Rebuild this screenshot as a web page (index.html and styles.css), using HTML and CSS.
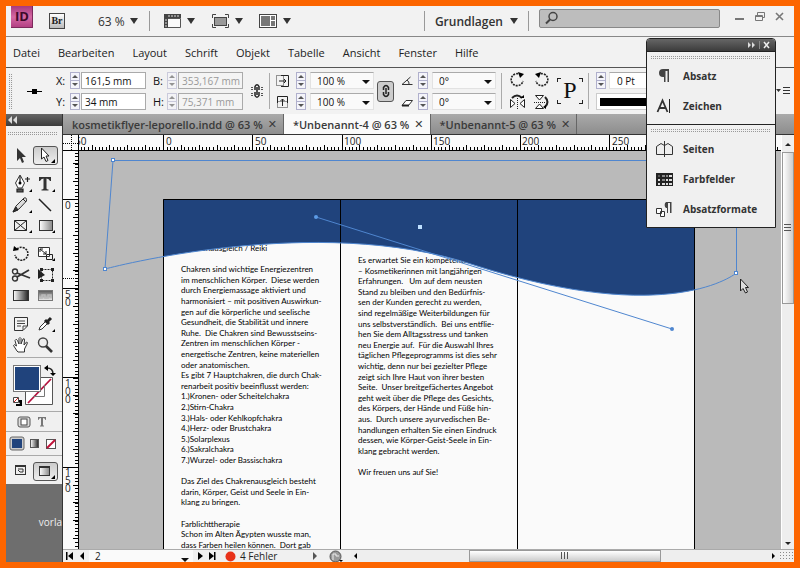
FILE: index.html
```html
<!DOCTYPE html>
<html lang="de">
<head>
  <meta charset="utf-8" />
  <title>*Unbenannt-4 @ 63 %</title>
  <link rel="stylesheet" href="styles.css">
</head>
<body>
<div id="app">

  <header id="appbar">
    <svg class="logo" width="22" height="22">
      <defs><linearGradient id="pink" x1="0" y1="0" x2="0" y2="1"><stop offset="0" stop-color="#a83a7c"/><stop offset=".5" stop-color="#d568a4"/><stop offset="1" stop-color="#b03c80"/></linearGradient></defs>
      <rect width="22" height="22" fill="url(#pink)"/>
      <path d="M0 21.500H21.500V0" fill="none" stroke="#7d2a5c"/>
      <text x="4" y="15" class="logo-text">ID</text>
    </svg>
    <button class="bridge">Br</button>
    <button class="drop zoom">63 %<i class="caret"></i></button>
    <span class="sep"></span>
    <button class="drop view" aria-label="Anzeigeoptionen">
      <svg width="20" height="16"><path d="M1 1H18V5H5V15H1Z" fill="#444"/><path d="M5 5.500H17.500V14.500H5" fill="#fafafa" stroke="#555"/><path d="M6 2V4M9 2V4M12 2V4M15 2V4M2 7H4M2 10H4M2 13H4" stroke="#ddd"/></svg><i class="caret"></i>
    </button>
    <button class="drop view" aria-label="Bildschirmmodus">
      <svg width="20" height="16"><path d="M1.500 5V1.500H5M14 1.500H17.500V5M17.500 11V14.500H14M5 14.500H1.500V11" fill="none" stroke="#444"/><rect x="3.500" y="4.500" width="12" height="8" fill="#999" stroke="#444"/></svg><i class="caret"></i>
    </button>
    <button class="drop view" aria-label="Dokumente anordnen">
      <svg width="20" height="16"><rect x=".5" y="1.500" width="17" height="13" fill="#fff" stroke="#444"/><path d="M2 3H11V13H2ZM12 3H16V7H12ZM12 8H16V13H12Z" fill="#777"/></svg><i class="caret"></i>
    </button>
    <span class="sep push"></span>
    <button class="drop workspace">Grundlagen<i class="caret"></i></button>
    <span class="sep"></span>
    <label class="search">
      <svg width="16" height="14"><circle cx="9" cy="5.500" r="4" fill="none" stroke="#444" stroke-width="1.500"/><path d="M6 8.500L2 12.500" stroke="#444" stroke-width="2"/></svg>
      <input type="text" aria-label="Suchen">
    </label>
    <button class="win" aria-label="Minimieren"><svg width="12" height="12"><path d="M1 8H10" stroke="#777" stroke-width="2"/></svg></button>
    <button class="win" aria-label="Wiederherstellen"><svg width="12" height="12"><path d="M3.500 4V1.500H10.500V6.500H8.500M1.500 4.500H8.500V9.500H1.500ZM1 5.500H8" fill="none" stroke="#777"/></svg></button>
    <button class="win" aria-label="Schließen"><svg width="12" height="12"><path d="M2 2L9 9M9 2L2 9" stroke="#777" stroke-width="1.600"/></svg></button>
  </header>

  <nav id="menu">
    <a href="#">Datei</a><a href="#">Bearbeiten</a><a href="#">Layout</a><a href="#">Schrift</a><a href="#">Objekt</a><a href="#">Tabelle</a><a href="#">Ansicht</a><a href="#">Fenster</a><a href="#">Hilfe</a>
  </nav>

  <div id="control">
    <span class="vgrip"></span>
    <svg class="refpoint" width="18" height="12"><path d="M1 6.500H16" stroke="#000"/><rect x="6" y="4" width="5" height="5"/></svg>
    <div class="fields pos">
      <label for="fx">X:</label><span class="spin"></span><input id="fx" value="161,5 mm">
      <label for="fy">Y:</label><span class="spin"></span><input id="fy" value="34 mm">
    </div>
    <div class="fields pos">
      <label for="fb">B:</label><span class="spin off"></span><input id="fb" value="353,167 mm" disabled>
      <label for="fh">H:</label><span class="spin off"></span><input id="fh" value="75,371 mm" disabled>
    </div>
    <svg class="chain" width="14" height="18"><path d="M5 8V4.500Q7 1 9 4.500V8M5 10V13.500Q7 17 9 13.500V10M7 5V13" fill="none" stroke="#222" stroke-width="1.500"/><path d="M2 5V8M12 5V8M2 11V14M12 11V14" stroke="#555" stroke-width="2" stroke-dasharray="1 1"/></svg>
    <span class="sep tall"></span>
    <div class="fields scale">
      <svg width="16" height="14"><rect x="1.500" y="1.500" width="7" height="10" fill="none" stroke="#333" stroke-dasharray="1 1"/><path d="M6 1.500H13.500V12.500H6M4 7H11M9 5L11 7L9 9" fill="none" stroke="#222"/></svg><span class="spin"></span><span class="combo"><select aria-label="X-Skalierung"><option>100 %</option></select></span>
      <svg width="16" height="14"><rect x="2.500" y="6.500" width="10" height="6" fill="none" stroke="#333" stroke-dasharray="1 1"/><path d="M2.500 8V1.500H12.500V8M7.500 11V4M5.500 6L7.500 4L9.500 6" fill="none" stroke="#222"/></svg><span class="spin"></span><span class="combo"><select aria-label="Y-Skalierung"><option>100 %</option></select></span>
    </div>
    <button class="lock" aria-label="Proportionen beibehalten"><svg width="12" height="16"><path d="M3.500 7V4.500Q6 .5 8.500 4.500V7M3.500 9V11.500Q6 15.500 8.500 11.500V9M6 5V11" fill="none" stroke="#222" stroke-width="1.500"/></svg></button>
    <div class="fields angle">
      <svg width="14" height="14"><path d="M10.500 3L2 10.500H12.500M7 6Q9.500 8 9 10" fill="none" stroke="#333"/></svg><span class="spin"></span><span class="combo"><select aria-label="Drehwinkel"><option>0°</option></select></span>
      <svg width="14" height="14"><path d="M2 10.500L6 5.500H12.500L8.500 10.500Z" fill="#fff" stroke="#333"/><path d="M2 10.500H9" stroke="#222" stroke-width="2"/></svg><span class="spin"></span><span class="combo"><select aria-label="Scherwinkel"><option>0°</option></select></span>
    </div>
    <span class="sep tall"></span>
    <div class="turns">
      <button aria-label="90° drehen"><svg width="18" height="16"><path d="M12 3A6 6 0 1 0 14 9" fill="none" stroke="#222" stroke-width="1.600" stroke-dasharray="2 1"/><path d="M9 0L15 2L11 6Z"/></svg></button>
      <button aria-label="-90° drehen"><svg width="18" height="16"><path d="M5 3A6 6 0 1 1 3 9" fill="none" stroke="#222" stroke-width="1.600" stroke-dasharray="2 1"/><path d="M8 0L2 2L6 6Z"/></svg></button>
      <button aria-label="Horizontal spiegeln"><svg width="18" height="16"><path d="M3 4Q8 -1 13 4" fill="none" stroke="#222" stroke-width="2"/><path d="M11 4H15V1Z"/><path d="M1.500 5.500V13.500L6 9.500ZM15.500 5.500V13.500L11 9.500Z" fill="#fff" stroke="#222"/><path d="M8.500 4V15" stroke="#222" stroke-dasharray="1 1"/></svg></button>
      <button aria-label="Vertikal spiegeln"><svg width="18" height="16"><path d="M12 3Q17 8 12 13" fill="none" stroke="#222" stroke-width="2"/><path d="M10 13L13 15V11Z"/><path d="M2.500 1.500H10.500L6.500 6ZM2.500 14.500H10.500L6.500 10Z" fill="#fff" stroke="#222"/><path d="M1 8.500H13" stroke="#222" stroke-dasharray="1 1"/></svg></button>
    </div>
    <span class="pbox">P</span>
    <span class="sep tall"></span>
    <div class="stroke">
      <span class="spin"></span><input aria-label="Konturstärke" value="0 Pt">
      <span class="line"></span>
    </div>
    <button class="flyout" aria-label="Bedienfeldmenü"><svg width="16" height="14"><path d="M0 5H5L2.500 8ZM7 3H14V4H7ZM7 6H14V7H7ZM7 9H14V10H7Z" fill="#333"/></svg></button>
  </div>

  <div id="work">
    <aside id="toolbox">
      <div class="dark"><svg width="10" height="8"><path d="M4 0V8L0 4ZM9 0V8L5 4Z" fill="#ddd"/></svg></div>
      <div class="grip"></div>
      <div class="tools">
        <button aria-label="Auswahl"><svg width="24" height="20"><path d="M6 2V15L9 12L11 17L13 16L11 11H15Z" fill="#333"/></svg></button>
        <button class="on" aria-label="Direktauswahl"><svg width="24" height="20"><path d="M8.500 3V14L11 12L13 16.500L15 15.500L13 11H16Z" fill="#fff" stroke="#222"/><path d="M22 14V18H18Z"/></svg></button>
      </div>
      <div class="tools">
        <button aria-label="Zeichenstift"><svg width="24" height="20"><path d="M9 1L13.500 9L11 14H7L4.500 9Z" fill="#fff" stroke="#333"/><path d="M9 2V9M6 15H12V18H6ZM14 5H19M16.500 3V8" stroke="#222" fill="#555" stroke-width="1.200"/><circle cx="9" cy="9" r="1.500"/><path d="M21 15V18H18Z"/></svg></button>
        <button aria-label="Text"><svg width="24" height="20"><path d="M6 3H18V7H17Q16 4.500 13.500 4.500V14.500Q13.500 15.500 15.500 15.500V16.500H8.500V15.500Q10.500 15.500 10.500 14.500V4.500Q8 4.500 7 7H6Z" fill="#333"/><path d="M22 15V18H19Z"/></svg></button>
        <button aria-label="Buntstift"><svg width="24" height="20"><path d="M2 17L5 11L13 3Q16 2 15.500 6L8 14Z" fill="#ddd" stroke="#333"/><path d="M2 17L5 12L7 15ZM12 4L15 7" fill="#333" stroke="#222"/><path d="M21 15V18H18Z"/></svg></button>
        <button aria-label="Linienzeichner"><svg width="24" height="20"><path d="M6 4L18 16" stroke="#222" stroke-width="1.500"/></svg></button>
        <button aria-label="Rechteckrahmen"><svg width="24" height="20"><path d="M3.500 4.500H15.500V14.500H3.500ZM3.500 4.500L15.500 14.500M15.500 4.500L3.500 14.500" fill="none" stroke="#222"/><path d="M21 14V17H18Z"/></svg></button>
        <button aria-label="Rechteck"><svg width="24" height="20"><defs><linearGradient id="gr" x2="1"><stop offset="0" stop-color="#fff"/><stop offset="1" stop-color="#888"/></linearGradient></defs><rect x="6.500" y="4.500" width="13" height="10" fill="url(#gr)" stroke="#333"/><path d="M22 14V17H19Z"/></svg></button>
      </div>
      <div class="tools">
        <button aria-label="Drehen"><svg width="24" height="20"><path d="M6 5A6.500 6.500 0 1 1 4 11" fill="none" stroke="#222" stroke-width="1.600" stroke-dasharray="2 1"/><path d="M2 7L3 2L8 6Z"/></svg></button>
        <button aria-label="Skalieren"><svg width="24" height="20"><path d="M5.500 3.500H16.500V12.500H5.500Z" fill="#fff" stroke="#333"/><path d="M7 5L13 10M7 8V5H10M13 7V10H10M13.500 10.500H19.500V15.500H13.500Z" fill="none" stroke="#222"/><path d="M22 14V17H19Z"/></svg></button>
        <button aria-label="Schere"><svg width="24" height="20"><path d="M6 8L19 13M6 12L18 5" stroke="#333" stroke-width="1.800"/><circle cx="4" cy="6.500" r="2.500" fill="none" stroke="#333" stroke-width="1.400"/><circle cx="4" cy="13.500" r="2.500" fill="none" stroke="#333" stroke-width="1.400"/></svg></button>
        <button aria-label="Frei transformieren"><svg width="24" height="20"><rect x="8.500" y="4.500" width="11" height="11" fill="none" stroke="#222" stroke-dasharray="2 1"/><path d="M5 4V14L12 10ZM7 3H10V6H7ZM18 3H21V6H18ZM18 14H21V17H18ZM7 14H10V17H7Z" fill="#222"/></svg></button>
        <button aria-label="Verlaufsfarbfeld"><svg width="24" height="20"><defs><linearGradient id="bw" x2="1"><stop offset="0" stop-color="#fff"/><stop offset="1" stop-color="#222"/></linearGradient></defs><rect x="2.500" y="4.500" width="15" height="10" fill="url(#bw)" stroke="#333"/></svg></button>
        <button aria-label="Weiche Verlaufskante"><svg width="24" height="20"><defs><linearGradient id="fd" x2="0" y2="1"><stop offset="0" stop-color="#555"/><stop offset="1" stop-color="#eee"/></linearGradient></defs><rect x="5.500" y="4.500" width="14" height="10" fill="url(#fd)" stroke="#777"/><path d="M6 12H9V9H12V12H15V9H18V12" fill="none" stroke="#bbb" stroke-width="1.500"/></svg></button>
      </div>
      <div class="tools">
        <button aria-label="Notiz"><svg width="24" height="20"><path d="M3.500 3.500H16.500V12L12 16.500H3.500Z" fill="#f4f4f4" stroke="#333"/><path d="M6 7H14M6 9.500H14M6 12H10M12 16V12H16" fill="none" stroke="#444"/></svg></button>
        <button aria-label="Pipette"><svg width="24" height="20"><path d="M6 16L7 13L13 7L15 9L9 15Z" fill="#fff" stroke="#333"/><path d="M12 6L16 10M14 8L18 4" stroke="#222" stroke-width="3"/><path d="M22 15V18H19Z"/></svg></button>
        <button aria-label="Hand"><svg width="24" height="20"><path d="M6 16L2.500 10.500Q3 8.500 5.500 11L4 5.500Q5 3 6.500 5.500L8 9V3.500Q9 1.500 10 3.500V9L12 4Q13.500 3 13.500 5L13 10L15.500 7Q17 7 16 9L13.500 14V17H7Z" fill="#fff" stroke="#333"/></svg></button>
        <button aria-label="Zoom"><svg width="24" height="20"><circle cx="10" cy="7.500" r="4.500" fill="#eee" stroke="#444" stroke-width="1.400"/><path d="M13 11L19 17" stroke="#333" stroke-width="2.600"/></svg></button>
      </div>
      <div class="swatches">
        <svg width="50" height="48">
          <path d="M32 15.500H44.500V42.500H17.500V30" fill="#fff" stroke="#555"/><path d="M20 41L43 17" stroke="#b5123f" stroke-width="1.800"/><path d="M36.500 23V34.500H25" fill="none" stroke="#777"/>
          <rect x="5.500" y="3.500" width="27" height="26" fill="#fff" stroke="#777"/><rect x="7" y="5" width="24" height="23" fill="#20437c"/>
          <path d="M39 6Q45 6 45 12" fill="none" stroke="#222" stroke-width="1.500"/><path d="M36 6L40 3V9ZM42 11H48L45 14Z"/>
          <path d="M10 38H14V44H8V42H12Z"/><path d="M5.500 35.500H10.500V40.500H5.500Z" fill="#fff" stroke="#444"/><path d="M6 40L10 36" stroke="#c22"/>
        </svg>
      </div>
      <div class="apply two">
        <button aria-label="Formatierung wirkt sich auf Rahmen aus"><svg width="14" height="12"><rect x="1" y="1" width="12" height="10" rx="2" fill="#ddd" stroke="#555"/><rect x="4" y="3" width="6" height="6" fill="#fff" stroke="#444"/></svg></button>
        <button aria-label="Formatierung wirkt sich auf Text aus"><svg width="12" height="12"><path d="M2 1H10V4H9.500Q9 2 7 2V9.500H8V10.500H4V9.500H5V2Q3 2 2.500 4H2Z" fill="#777"/></svg></button>
      </div>
      <div class="apply fill">
        <button aria-label="Farbe"><svg width="16" height="16"><rect x="1" y="1" width="14" height="13" rx="2" fill="#ccc" stroke="#666"/><rect x="3" y="3" width="10" height="9" fill="#20437c"/></svg></button>
        <button aria-label="Verlauf"><svg width="10" height="12"><rect x=".5" y="1.500" width="8" height="8" fill="url(#bw)" stroke="#555"/></svg></button>
        <button aria-label="Ohne"><svg width="12" height="12"><rect x="1.500" y="1.500" width="9" height="9" fill="#fff" stroke="#555"/><path d="M2 10L10 2" stroke="#c1123a" stroke-width="2"/></svg></button>
      </div>
      <div class="tools modes">
        <button aria-label="Normal"><svg width="24" height="20"><rect x="4.500" y="4.500" width="10" height="9" fill="#eee" stroke="#333"/><path d="M4 5.500H15M7 8H12V11H9L7 9" fill="none" stroke="#333"/></svg></button>
        <button class="on" aria-label="Vorschau"><svg width="24" height="20"><rect x="6.500" y="5.500" width="10" height="9" fill="url(#gr)" stroke="#333"/><path d="M6 6.500H17" stroke="#333"/><path d="M22 14V18H18Z"/></svg></button>
      </div>
      <div class="rest">vorla</div>
    </aside>

    <main id="doc">
      <div id="tabs">
        <div class="tab">kosmetikflyer-leporello.indd @ 63 %<button aria-label="Schließen">✕</button></div>
        <div class="tab active">*Unbenannt-4 @ 63 %<button aria-label="Schließen">✕</button></div>
        <div class="tab">*Unbenannt-5 @ 63 %<button aria-label="Schließen">✕</button></div>
      </div>

      <div id="view">
        <svg class="corner" width="16" height="16"><path d="M8.500 0V16M0 8.500H16" stroke="#000" stroke-dasharray="1 1"/></svg>
        <svg class="ruler" width="100%" height="16" shape-rendering="crispEdges">
          <path d="M1.900 13.500H2000" stroke="#000" stroke-width="3" stroke-dasharray="1 2.570"/>
          <path d="M12.600 12.500H2000" stroke="#000" stroke-width="5" stroke-dasharray="1 16.850"/>
          <path d="M84 8H2000" stroke="#000" stroke-width="16" stroke-dasharray="1 88.250"/>
          <text x="-4" y="10">50</text><text x="87" y="10">0</text><text x="176" y="10">50</text><text x="265" y="10">100</text><text x="354" y="10">150</text><text x="443" y="10">200</text><text x="533" y="10">250</text><text x="622" y="10">300</text>
        </svg>
        <svg class="ruler side" width="16" height="100%" shape-rendering="crispEdges">
          <path d="M13.500 1.900V2000" stroke="#000" stroke-width="3" stroke-dasharray="1 2.570"/>
          <path d="M12.500 12.300V2000" stroke="#000" stroke-width="5" stroke-dasharray="1 16.850"/>
          <path d="M8 48V2000" stroke="#000" stroke-width="16" stroke-dasharray="1 88.250"/>
          <path d="M0 127.500H16" stroke="#000" stroke-dasharray="1 1"/>
          <text x="2" y="58">0</text>
          <text x="2" y="147">5</text><text x="2" y="155">0</text>
          <text x="2" y="236">1</text><text x="2" y="244">0</text><text x="2" y="252">0</text>
          <text x="2" y="325">1</text><text x="2" y="333">5</text><text x="2" y="341">0</text>
        </svg>

        <div id="canvas">
          <article class="page">
            <p class="col">
              <span>Chakrenausgleich / Reiki</span>
              <span></span>
              <span>Chakren sind wichtige Energiezentren</span>
              <span>im menschlichen Körper.  Diese werden</span>
              <span>durch Energiemassage aktiviert und</span>
              <span>harmonisiert – mit positiven Auswirkun-</span>
              <span>gen auf die körperliche und seelische</span>
              <span>Gesundheit, die Stabilität und innere</span>
              <span>Ruhe.  Die Chakren sind Bewusstseins-</span>
              <span>Zentren im menschlichen Körper -</span>
              <span>energetische Zentren, keine materiellen</span>
              <span>oder anatomischen.</span>
              <span>Es gibt 7 Hauptchakren, die durch Chak-</span>
              <span>renarbeit positiv beeinflusst werden:</span>
              <span>1.)Kronen- oder Scheitelchakra</span>
              <span>2.)Stirn-Chakra</span>
              <span>3.)Hals- oder Kehlkopfchakra</span>
              <span>4.)Herz- oder Brustchakra</span>
              <span>5.)Solarplexus</span>
              <span>6.)Sakralchakra</span>
              <span>7.)Wurzel- oder Bassischakra</span>
              <span></span>
              <span>Das Ziel des Chakrenausgleich besteht</span>
              <span>darin, Körper, Geist und Seele in Ein-</span>
              <span>klang zu bringen.</span>
              <span></span>
              <span>Farblichttherapie</span>
              <span>Schon im Alten Ägypten wusste man,</span>
              <span>dass Farben heilen können.  Dort gab</span>
            </p>
            <p class="col second">
              <span>Es erwartet Sie ein kompetentes Team</span>
              <span>– Kosmetikerinnen mit langjährigen</span>
              <span>Erfahrungen.   Um auf dem neusten</span>
              <span>Stand zu bleiben und den Bedürfnis-</span>
              <span>sen der Kunden gerecht zu werden,</span>
              <span>sind regelmäßige Weiterbildungen für</span>
              <span>uns selbstverständlich.  Bei uns entflie-</span>
              <span>hen Sie dem Alltagsstress und tanken</span>
              <span>neu Energie auf.  Für die Auswahl Ihres</span>
              <span>täglichen Pflegeprogramms ist dies sehr</span>
              <span>wichtig, denn nur bei gezielter Pflege</span>
              <span>zeigt sich Ihre Haut von ihrer besten</span>
              <span>Seite.  Unser breitgefächertes Angebot</span>
              <span>geht weit über die Pflege des Gesichts,</span>
              <span>des Körpers, der Hände und Füße hin-</span>
              <span>aus.  Durch unsere ayurvedischen Be-</span>
              <span>handlungen erhalten Sie einen Eindruck</span>
              <span>dessen, wie Körper-Geist-Seele in Ein-</span>
              <span>klang gebracht werden.</span>
              <span></span>
              <span>Wir freuen uns auf Sie!</span>
            </p>
            <p class="col"></p>
          </article>
          <!-- blue wave, fold lines and the selected path -->
          <svg class="shape" width="100%" height="100%">
            <defs><clipPath id="sheet"><rect x="84" y="48" width="532" height="900"/></clipPath></defs>
            <path clip-path="url(#sheet)" d="M34 9L26 118C26 118 237 61 395 114C593 177 657 122 657 122V9Z" fill="#20437c"/>
            <path d="M84.500 900V48.500H615.500V900M261.500 48V900M438.500 48V900" fill="none" stroke="#000"/>
            <path d="M34 9.500L26 118C26 118 237 61 395 114C593 177 657 122 657.500 122V9.500ZM237 66L593 178" fill="none" stroke="#4f86cf"/>
            <g fill="#fff" stroke="#4f86cf"><rect x="32.500" y="7.500" width="3" height="3"/><rect x="24.500" y="116.500" width="3" height="3"/><rect x="655.500" y="120.500" width="3" height="3"/></g>
            <rect x="339" y="74" width="4" height="4" fill="#bfe0ff"/>
            <circle cx="237" cy="66" r="2" fill="#5c9be6"/><circle cx="593" cy="178" r="2" fill="#4f86cf"/>
            <path d="M661.500 128V140L664 137.500L666.500 142L668.500 141L666.500 136.500H669.500Z" fill="#ddd" stroke="#222"/>
          </svg>
        </div>
      </div>

      <div id="vscroll">
        <svg width="12" height="12"><path d="M3 7H9L6 4Z" fill="#222"/></svg>
        <div class="thumb"><svg width="8" height="10"><path d="M0 1.500H7M0 4.500H7M0 7.500H7" stroke="#555"/></svg></div>
        <svg class="down" width="12" height="12"><path d="M3 5H9L6 8Z" fill="#222"/></svg>
      </div>

      <footer id="status">
        <button aria-label="Erste Seite"><svg width="10" height="10"><path d="M1 1H2.500V9H1ZM8 1V9L3 5Z"/></svg></button>
        <button aria-label="Vorherige Seite"><svg width="10" height="10"><path d="M6 1V9L2 5Z"/></svg></button>
        <span class="combo pages"><select aria-label="Seite"><option>2</option></select></span>
        <button aria-label="Nächste Seite"><svg width="10" height="10"><path d="M3 1V9L8 5Z"/></svg></button>
        <button aria-label="Letzte Seite"><svg width="10" height="10"><path d="M1 1V9L6 5ZM6 1H7.500V9H6Z"/></svg></button>
        <svg class="error" width="11" height="11"><circle cx="5.500" cy="5.500" r="5" fill="#e8321a"/></svg>
        <span class="msg">4 Fehler</span>
        <button aria-label="Preflight-Menü"><svg width="10" height="10"><path d="M3 1V9L7 5Z" fill="#555"/></svg></button>
        <svg class="clock" width="14" height="12"><circle cx="6.500" cy="6.500" r="5.500" fill="#999" stroke="#555"/><path d="M4 10V4H7V6H10" fill="none" stroke="#eee"/><path d="M10 10H14L12 12Z"/></svg>
        <div id="hscroll">
          <svg width="10" height="10"><path d="M6 2V8L3 5Z"/></svg>
          <div class="thumb"><svg width="10" height="8"><path d="M1.500 0V7M4.500 0V7M7.500 0V7" stroke="#555"/></svg></div>
          <svg width="10" height="10"><path d="M3 2V8L6 5Z"/></svg>
        </div>
        <span class="size"></span>
      </footer>
    </main>
  </div>

  <section id="dock">
    <div class="dark"><svg width="28" height="8"><path d="M1 1V7L4 4ZM5 1V7L8 4Z" fill="#ddd"/><path d="M12.500 0V8" stroke="#888"/><path d="M17 1L22 7M22 1L17 7" stroke="#eee" stroke-width="1.500"/></svg></div>
    <div class="group">
      <div class="grip"></div>
      <button><svg width="20" height="20"><path d="M12 3H8A4 4 0 0 0 8 11H9V16H10.500V5H12.500V16H14V3Z" fill="#444"/></svg>Absatz</button>
      <button><svg width="20" height="20"><path d="M2.500 16L7.500 4.500L12.500 16M4.500 12H10.500" fill="none" stroke="#333" stroke-width="1.800"/><path d="M14.500 3V17" stroke="#222"/></svg>Zeichen</button>
    </div>
    <div class="group">
      <div class="grip"></div>
      <button><svg width="20" height="20"><path d="M1.500 7.500L6 4.500L9.500 6.500V15.500H1.500ZM17.500 7.500L13 4.500L9.500 6.500V15.500H17.500Z" fill="#eee" stroke="#333"/><path d="M9.500 2V18" stroke="#333"/></svg>Seiten</button>
      <button><svg width="20" height="20"><rect x="1" y="4" width="17" height="13" fill="#222"/><path d="M3 6H5V8H3Z" fill="#555"/><path d="M7 6H10V8H7ZM11 6H13V8H11ZM7 10H10V12H7Z" fill="#888"/><path d="M14 6H17V8H14ZM11 10H13V12H11ZM14 10H17V12H14ZM3 10H5V12H3ZM3 14H5V16H3ZM7 14H10V16H7ZM11 14H13V16H11ZM14 14H17V16H14Z" fill="#ddd"/></svg>Farbfelder</button>
      <button><svg width="20" height="20"><path d="M15 3H11A4 4 0 0 0 11 9H12V14H13V4H15V14H16.500V3Z" fill="#444"/><path d="M5.500 12.500H9.500V17.500H5.500ZM1.500 9.500H6.500V14.500H1.500Z" fill="#fff" stroke="#333"/></svg>Absatzformate</button>
    </div>
  </section>

</div>
</body>
</html>
```
FILE: styles.css
```css
html, body { margin: 0; padding: 0; height: 100%; }
body { font-family: "Open Sans", "Noto Sans", sans-serif; font-size: 12px; color: #333; background: #fc6500; }
* { box-sizing: border-box; }
button, input, select { font: inherit; color: inherit; margin: 0; padding: 0; border: 0; background: none; border-radius: 0; outline: none; }
svg { display: block; flex: none; }
#app { position: relative; height: 100vh; border: 6px solid #fc6500; background: #f2f2f2; display: flex; flex-direction: column; overflow: hidden; }

.caret { width: 0; height: 0; border: 4px solid transparent; border-top: 6px solid #333; border-bottom: 0; }
.sep { width: 1px; height: 20px; background: #999; }
.sep.tall { height: 36px; background: #aaa; }
.dark { height: 12px; background: linear-gradient(#666, #3c3c3c); display: flex; align-items: center; }
.grip, .vgrip { height: 5px; background: repeating-linear-gradient(#f0f0f0 0 1px, transparent 1px 2px), repeating-linear-gradient(90deg, #999 0 1px, #f0f0f0 1px 2px); }

/* application bar */
#appbar { display: flex; align-items: center; height: 31px; flex: none; border-bottom: 1px solid #888; padding-left: 5px; padding-right: 6px; }
.logo { align-self: flex-start; }
.logo-text { font: bold 13px "Open Sans", sans-serif; fill: #3c0a2a; }
.bridge { width: 16px; height: 16px; margin-left: 16px; border: 1px solid #444; background: linear-gradient(#fff, #bbb); font: bold 10px/12px "Liberation Serif", serif; text-align: center; color: #222; }
.drop { display: flex; align-items: center; }
.drop .caret { margin-left: 7px; }
.zoom { margin-left: 33px; margin-right: 11px; }
.zoom .caret { margin-left: 5px; }
.view { margin-left: 13px; width: 35px; }
.view .caret { margin-left: 4px; }
.push { margin-left: auto; }
.workspace { font-weight: 600; padding: 0 10px; }
.search { display: flex; align-items: center; width: 181px; height: 19px; margin: 0 8px 6px 10px; padding-left: 4px; border: 1px solid #888; background: #bdbdbd; border-radius: 2px; }
.search input { flex: 1; min-width: 0; }
.win { margin: 0 0 8px 4px; width: 16px; padding-left: 2px; }

#menu { display: flex; align-items: center; flex: none; height: 31px; padding-left: 7px; gap: 18px; border-bottom: 1px solid #555; font-size: 11px; }
#menu a { color: #222; text-decoration: none; }

/* control panel */
#control { display: flex; align-items: center; flex: none; height: 46px; font-size: 10px; color: #111; }
.vgrip { width: 4px; height: 36px; margin-left: 3px; }
.refpoint { margin: 0 12px 0 13px; }
.fields { display: grid; row-gap: 4px; align-items: center; }
.fields label { font-size: 11px; line-height: 16px; }
.pos { grid-template-columns: 14px 11px 65px; width: 90px; margin-right: 7px; }
.scale { grid-template-columns: 21px 14px 64px; margin-left: 5px; }
.angle { grid-template-columns: 18px 14px 64px; margin: 0 5px 0 6px; }
.fields input, .stroke input { width: 100%; height: 17px; border: 1px solid #aaa; background: #fff; padding-left: 3px; }
.fields input:disabled { color: #999; background: #f4f4f4; }
.spin { position: relative; width: 10px; height: 17px; border: 1px solid #b0b0cc; background: linear-gradient(#b0b0cc, #b0b0cc) 0 7px / 100% 1px no-repeat #f4f4fa; }
.spin::before, .spin::after { content: ""; position: absolute; left: 1px; border: 3px solid transparent; }
.spin::before { top: 2px; border-bottom: 3px solid #555; border-top: 0; }
.spin::after { bottom: 2px; border-top: 3px solid #555; border-bottom: 0; }
.spin.off { opacity: .6; }
.combo { position: relative; display: block; }
.combo::after { content: ""; position: absolute; right: 4px; top: 8px; border: 4px solid transparent; border-top: 4px solid #111; border-bottom: 0; }
.combo select { appearance: none; display: block; width: 100%; height: 17px; padding-left: 6px; background: #fafafa; border: 1px solid #e2e2e2; border-top-color: #aaa; }
.chain { margin-right: 5px; }
.lock { width: 17px; height: 21px; margin-left: 3px; padding-left: 2px; border: 1px solid #555; border-radius: 3px; background: #ccc; }
.turns { display: grid; grid-template-columns: 24px 24px; row-gap: 6px; margin-left: 7px; }
.pbox { width: 26px; height: 26px; font: 24px/24px "Liberation Serif", serif; text-align: center;
  background: linear-gradient(#222, #222) 0 0 / 4px 1px, linear-gradient(#222, #222) 0 0 / 1px 4px, linear-gradient(#222, #222) 100% 0 / 4px 1px, linear-gradient(#222, #222) 100% 0 / 1px 4px, linear-gradient(#222, #222) 0 100% / 4px 1px, linear-gradient(#222, #222) 0 100% / 1px 4px, linear-gradient(#222, #222) 100% 100% / 4px 1px, linear-gradient(#222, #222) 100% 100% / 1px 4px;
  background-repeat: no-repeat; margin-right: 5px; }
.stroke { display: grid; grid-template-columns: 13px 1fr; row-gap: 4px; flex: 1; margin: 0 50px 0 7px; }
.stroke input { border-color: #aaa #e2e2e2 #e2e2e2; padding-left: 7px; }
.stroke .line { grid-column: 1 / 3; height: 17px; border: 1px solid #ccc; background: linear-gradient(#000, #000) 3px 4px / 100% 8px no-repeat #fff; }
.flyout { margin-right: 2px; }

/* toolbox */
#work { display: flex; flex: 1; min-height: 0; }
#toolbox { width: 57px; flex: none; display: flex; flex-direction: column; border-right: 1px solid #333; background: #f0f0f0; }
#toolbox .dark { padding-left: 2px; flex: none; }
#toolbox .grip { margin: 5px 4px 5px 2px; flex: none; }
.tools { display: grid; grid-template-columns: 25px 25px; margin-left: 1px; padding: 4px 1px 2px; border-bottom: 1px solid #aaa; flex: none; }
.tools button { height: 21px; }
.tools button:nth-child(odd) svg { margin-left: 3px; }
.tools .on { height: 19px; align-self: center; border: 1px solid #555; border-radius: 3px; background: linear-gradient(#ccc, #eee); }
.on svg { margin: -2px 0 0 -1px; }
.swatches { height: 54px; padding: 4px 0 0 2px; border-bottom: 1px solid #aaa; flex: none; }
.apply { display: flex; align-items: center; border-bottom: 1px solid #aaa; flex: none; }
.two { height: 20px; padding-left: 11px; gap: 5px; }
.fill { height: 24px; padding-left: 3px; gap: 5px; }
.modes { height: 28px; border-bottom: 0; }
.rest { flex: 1; padding-top: 30px; background: #6e6e6e; color: #eee; font-size: 10px; line-height: 16px; text-align: right; overflow: hidden; }

/* document window */
#doc { flex: 1; min-width: 0; display: grid; grid-template: 21px 1fr 13px / 1fr 13px; }
#tabs { grid-column: 1 / 3; display: flex; background: linear-gradient(#aaa, #8d8d8d); border-bottom: 1px solid #333; }
.tab { display: flex; align-items: center; padding: 0 6px 0 9px; border-right: 1px solid #666; font-weight: 600; color: #3a3a3a; font-size: 11px; white-space: nowrap; }
.tab.active { background: #fafafa; }
.tab button { margin-left: 5px; font: 11px "DejaVu Sans", sans-serif; }
#view { display: grid; grid-template: 16px 1fr / 16px 1fr; min-width: 0; min-height: 0; overflow: hidden; background: #fafafa; }
.corner { border-right: 1px solid #000; border-bottom: 1px solid #000; }
.ruler { overflow: hidden; border-bottom: 1px solid #000; }
.ruler.side { border-bottom: 0; border-right: 1px solid #000; min-height: 0; }
.ruler text { font: 10px "Open Sans", sans-serif; fill: #222; }
#canvas { position: relative; overflow: hidden; min-height: 0; background: #bababa; }
.page { display: flex; width: 532px; min-height: 900px; margin: 48px 0 0 84px; background: #fafafa; }
.col { width: 177px; margin: 0; padding: 44px 0 0 18px; display: grid; grid-auto-rows: 11px 10px 11px 10px 11px; align-content: start; font: 8px/11px "Lato", sans-serif; color: #000; white-space: pre; }
.col.second { padding-top: 56px; }
.shape { position: absolute; left: 0; top: 0; }

.thumb { display: flex; align-items: center; justify-content: center; border: 1px solid #999; }
#vscroll { display: flex; flex-direction: column; background: #eee; border-left: 1px solid #fff; padding-top: 4px; }
#vscroll .thumb { height: 37%; margin-top: 1px; background: linear-gradient(90deg, #fff, #ccc); }
.down { margin-top: auto; }
#status { grid-column: 1 / 3; display: flex; align-items: center; background: #f0f0f0; border-top: 1px solid #aaa; font-size: 10px; color: #222; overflow: hidden; }
#status > button { width: 13px; padding-left: 2px; }
.pages { width: 104px; }
.pages select { height: 12px; line-height: 12px; padding-left: 6px; border: 0; }
.error { margin-left: 6px; }
.msg { margin: 0 31px 0 4px; line-height: 12px; }
.clock { margin-left: 8px; }
#hscroll { flex: 1; display: flex; align-items: center; justify-content: space-between; margin-left: 8px; background: #eee; }
#hscroll .thumb { width: 45%; height: 12px; background: linear-gradient(#fff, #ccc); }
.size { width: 15px; height: 10px; background-image: radial-gradient(#888 1px, transparent 1px); background-size: 3px 3px; }

/* floating panel dock */
#dock { position: absolute; right: 18px; top: 32px; width: 130px; border: 1px solid #222; border-radius: 4px 4px 0 0; background: #f0f0f0; overflow: hidden; }
#dock .dark { justify-content: flex-end; }
.group { padding: 3px 0; border-top: 1px solid #222; }
.group .grip { margin: 0 4px 1px; }
.group button { display: flex; align-items: center; width: 100%; height: 30px; padding-left: 8px; gap: 8px; font-size: 10px; font-weight: 700; }
```
